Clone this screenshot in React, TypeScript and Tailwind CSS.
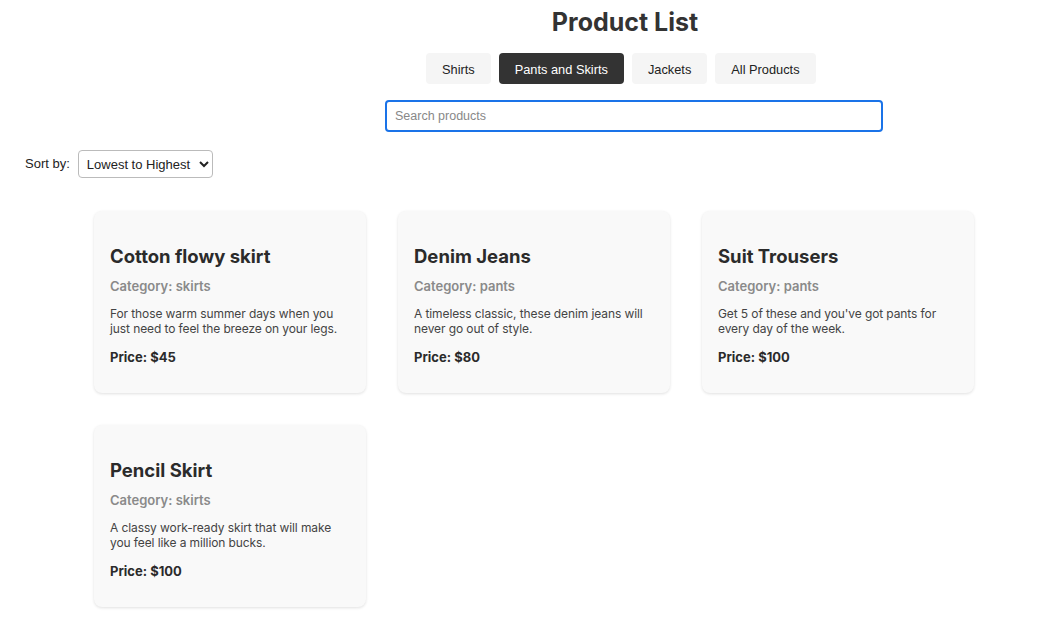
import React, { useState } from "react";

interface Product {
  id: number;
  name: string;
  category: string;
  description: string;
  price: number;
}

const products: Product[] = [
  { id: 1, name: "Cotton flowy skirt", category: "skirts", description: "For those warm summer days when you just need to feel the breeze on your legs.", price: 45 },
  { id: 2, name: "Denim Jeans", category: "pants", description: "A timeless classic, these denim jeans will never go out of style.", price: 80 },
  { id: 3, name: "Suit Trousers", category: "pants", description: "Get 5 of these and you've got pants for every day of the week.", price: 100 },
  { id: 4, name: "Pencil Skirt", category: "skirts", description: "A classy work-ready skirt that will make you feel like a million bucks.", price: 100 },
];

const tabs = ["Shirts", "Pants and Skirts", "Jackets", "All Products"];

function ProductCard({ product }: { product: Product }) {
  return (
    <div className="w-[272px] h-[182px] rounded-lg bg-[#f9f9f9] shadow-[0_1px_3px_rgba(0,0,0,0.12)] px-4 pt-[33px] font-['Inter',sans-serif]">
      <h2 className="text-[18.5px] leading-6 font-bold text-[#2b2b2b]">{product.name}</h2>
      <p className="mt-[10px] text-[13px] leading-4 font-semibold text-[#8a8a8a]">Category: {product.category}</p>
      <p className="mt-[12px] text-[12px] leading-[15px] tracking-[-0.1px] text-[#444]">{product.description}</p>
      <p className="mt-[13px] text-[13px] leading-4 font-bold text-[#2b2b2b]">Price: ${product.price}</p>
    </div>
  );
}

export default function App() {
  const [active, setActive] = useState("Pants and Skirts");

  return (
    <div className="w-[1047px] min-h-[623px] bg-white font-['Liberation_Sans',Arial,sans-serif] text-[#222]">
      <div className="pl-[203px] pt-[7px] text-center">
        <h1 className="text-[25px] leading-[30px] font-bold text-[#333] font-['Inter',sans-serif]">Product List</h1>
      </div>

      <div className="flex gap-2 mt-[16px] ml-[426px]">
        {tabs.map((t) => (
          <button
            key={t}
            onClick={() => setActive(t)}
            className={
              active === t
                ? "h-[31px] px-4 pt-[2px] rounded bg-[#333] text-white text-[12.8px]"
                : "h-[31px] px-4 pt-[2px] rounded bg-[#f5f5f5] text-[#222] text-[12.8px]"
            }
          >
            {t}
          </button>
        ))}
      </div>

      <div className="mt-[16px] ml-[385px]">
        <input
          placeholder="Search products"
          className="w-[498px] h-[32px] rounded border-2 border-[#1a73e8] px-2 text-[12.5px] outline-none placeholder:text-[#888]"
        />
      </div>

      <div className="flex items-center gap-2 mt-[18px] ml-[25px]">
        <label className="text-[13px]">Sort by:</label>
        <select className="w-[135px] h-[28px] rounded border border-[#bbb] bg-white pl-1 pr-0 text-[13px]">
          <option>Lowest to Highest</option>
          <option>Highest to Lowest</option>
        </select>
      </div>

      <div className="grid grid-cols-[repeat(3,272px)] gap-8 mt-[33px] ml-[94px] pb-4">
        {products.map((p) => (
          <ProductCard key={p.id} product={p} />
        ))}
      </div>
    </div>
  );
}
